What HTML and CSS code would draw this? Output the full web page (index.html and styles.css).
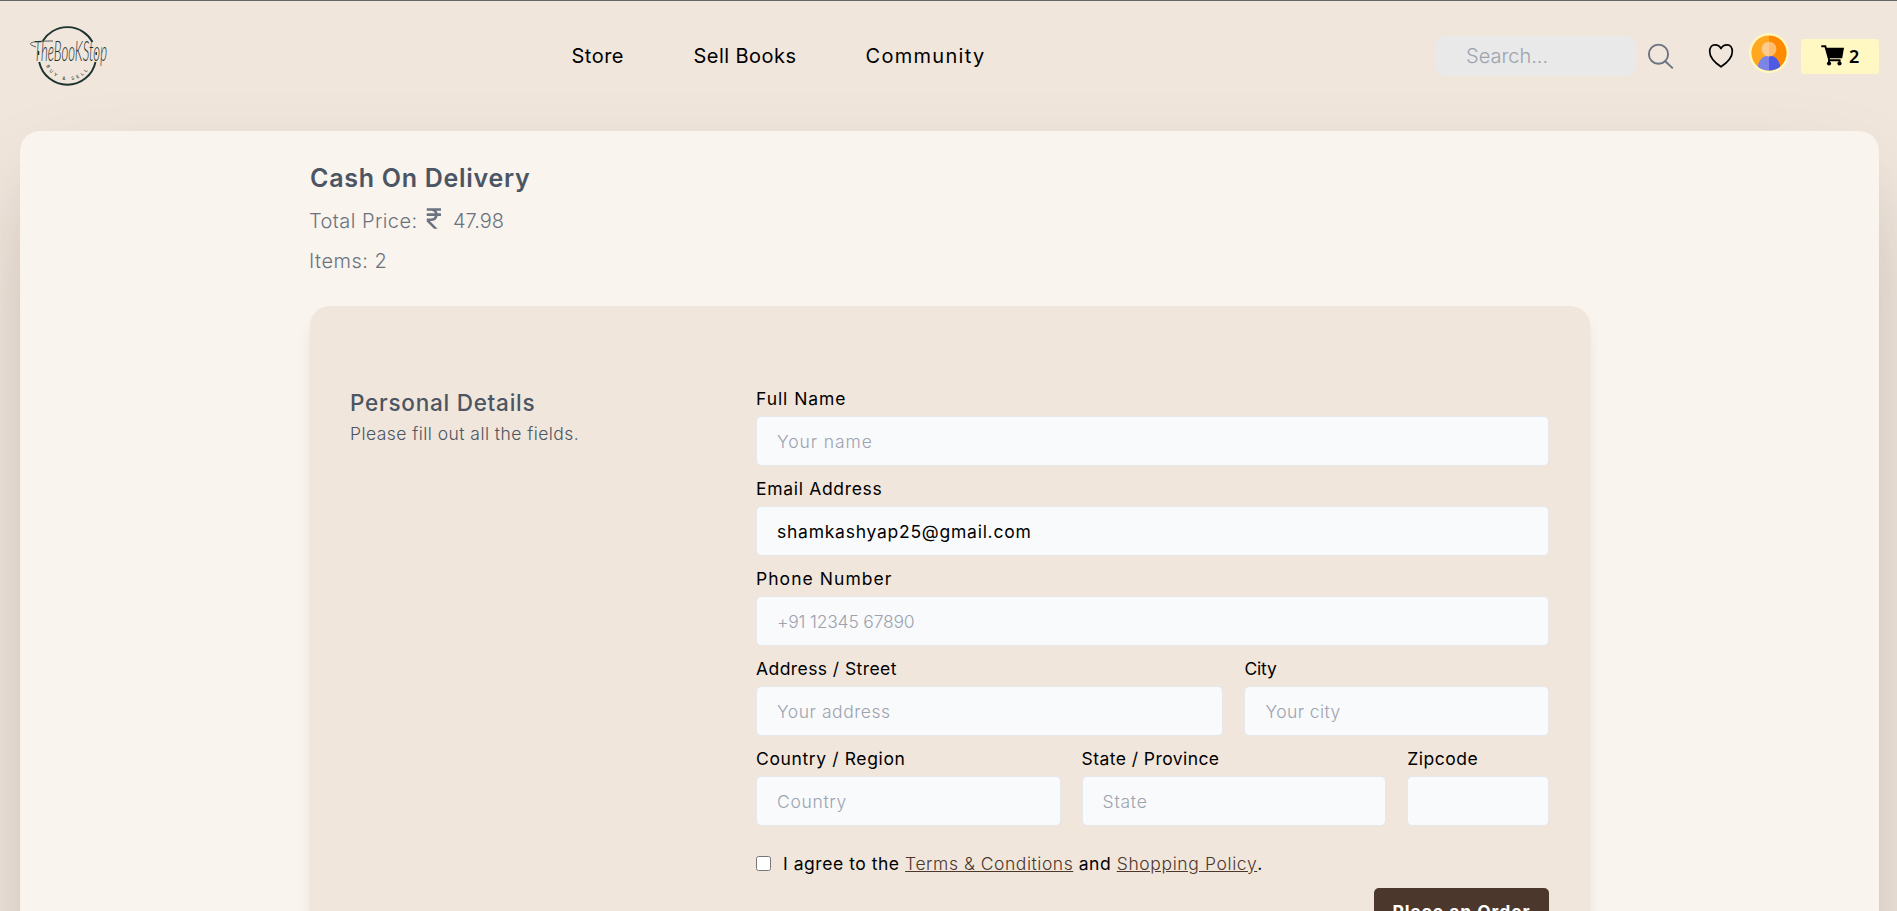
FILE: index.html
```html
<!DOCTYPE html>
<html lang="en">
<head>
<meta charset="utf-8">
<title>The Book Stop - Cash On Delivery</title>
<link rel="stylesheet" href="styles.css">
</head>
<body>
<header class="navbar">
  <a class="logo">
    <svg width="101" height="70" viewBox="0 0 101 70">
      <defs>
        <path id="arc" d="M25.500 43 A24 24 0 0 0 71 43"/>
      </defs>
      <path d="M22.700 20A28.800 28.800 0 0 1 72.500 21M75.500 41A28.800 28.800 0 0 1 19.200 41" fill="none" stroke="#1c332e" stroke-width="1.900"/>
      <path d="M18.500 34V30M76.200 34V31" stroke="#1c332e" stroke-width="1.500"/>
      <path d="M16 26C6 22.500 8 20 33 20" fill="none" stroke="#3c4f49" stroke-width=".9"/>
      <text class="wordmark" x="14" y="40" font-size="27" textLength="73" lengthAdjust="spacingAndGlyphs">TheBooKStop</text>
      <text class="tagline"><textPath href="#arc" startOffset="2">BUY &amp; SELL</textPath></text>
    </svg>
  </a>
  <nav class="menu">
    <a class="store">Store</a>
    <a class="sell">Sell Books</a>
    <a class="community">Community</a>
  </nav>
  <div class="tools">
    <input class="search" type="text" placeholder="Search...">
    <svg class="search-icon" width="27" height="27" viewBox="0 0 27 27" fill="none" stroke="#6b7280" stroke-width="1.9"><circle cx="11.5" cy="11.2" r="9.6"/><path d="M18 18l7.800 7.400"/></svg>
    <svg class="heart" width="26" height="26" viewBox="0 0 26 26" fill="none" stroke="#000" stroke-width="1.7" stroke-linejoin="round"><path d="M13 5.600C11.500 2.800 9.500 1.900 7 1.900C3.500 1.900 1.700 5 1.700 8.400C1.700 14.500 7.500 20 13 23.800C18.500 20 24.300 14.500 24.300 8.400C24.300 5 22.500 1.900 19 1.900C16.500 1.900 14.500 2.800 13 5.600z"/></svg>
    <svg class="avatar" width="40" height="40" viewBox="0 0 40 40">
      <defs><clipPath id="face"><circle cx="20" cy="20" r="17.600"/></clipPath></defs>
      <circle cx="20" cy="20" r="20" fill="#fff8c2"/>
      <g clip-path="url(#face)">
        <path fill="#ffa820" d="M0 0h20v40H0z"/><path fill="#ff8a00" d="M20 0h20v40H20z"/>
        <path fill="#7c84e8" d="M20 22.500C12 22.500 8 30 8 40h12z"/><path fill="#4d5ae5" d="M20 22.500C28 22.500 32 30 32 40H20z"/>
        <path fill="#ffcb8c" d="M20 8.700a7.400 7.400 0 0 0 0 14.800z"/><path fill="#ffbd6e" d="M20 8.700a7.400 7.400 0 0 1 0 14.800z"/>
      </g>
    </svg>
    <a class="cart">
      <svg width="24" height="22" viewBox="0 0 24 22"><path d="M4.600 2.800H23L21.200 13.300H7.800z"/><path d="M.3 1.300H4.300L8.300 15.300H19.500M8 15V18M18.600 15V18" fill="none" stroke="#000" stroke-width="1.900"/><circle cx="8" cy="18.500" r="2.100"/><circle cx="18.500" cy="18.500" r="2.100"/></svg>
      <span>2</span>
    </a>
  </div>
</header>

<main class="page">
  <div class="container">
    <h1>Cash On Delivery</h1>
    <p class="total"><span class="total-label">Total Price:</span><svg width="31" height="31" viewBox="0 0 24 24" fill="#6b7280"><path d="M17 6V4H6v2h3.500c1.302 0 2.401.838 2.815 2H6v2h6.315A2.994 2.994 0 0 1 9.500 12H6v2.414L11.586 20h2.828l-6-6H9.500a5.007 5.007 0 0 0 4.898-4H17V8h-2.602a4.933 4.933 0 0 0-.924-2H17z"/></svg><span class="amount">47.98</span></p>
    <p class="items">Items: 2</p>

    <section class="panel">
      <div class="intro">
        <h2>Personal Details</h2>
        <p>Please fill out all the fields.</p>
      </div>
      <form class="fields">
        <div class="field span5"><label class="t9">Full Name</label><input class="t9" placeholder="Your name"></div>
        <div class="field span5"><label class="t65">Email Address</label><input class="t75" value="shamkashyap25@gmail.com"></div>
        <div class="field span5"><label class="t10">Phone Number</label><input class="tn2" placeholder="+91 12345 67890"></div>
        <div class="field span3"><label class="t4">Address / Street</label><input class="t5" placeholder="Your address"></div>
        <div class="field span2"><label class="tn2">City</label><input class="t4" placeholder="Your city"></div>
        <div class="field span2"><label class="t6">Country / Region</label><input class="t65" placeholder="Country"></div>
        <div class="field span2"><label class="t4">State / Province</label><input class="t75" placeholder="State"></div>
        <div class="field"><label class="t5">Zipcode</label><input></div>
        <div class="agree span5">
          <input type="checkbox">
          <span class="t5">I agree to the <a>Terms &amp; Conditions</a> and <a class="t6">Shopping Policy</a>.</span>
        </div>
        <div class="submit span5"><button class="t9" type="button">Place an Order</button></div>
      </form>
    </section>
  </div>
</main>
</body>
</html>
```
FILE: styles.css
```css
* { box-sizing: border-box; }
body {
  margin: 0;
  height: 911px;
  overflow: hidden;
  background: #f0e6dc;
  font-family: Inter, "Noto Sans", sans-serif;
  font-size: 17.5px;
  font-weight: 375;
  color: #000;
}
h1, h2, p { margin: 0; }
input, button { font: inherit; letter-spacing: inherit; }

.navbar {
  display: flex;
  justify-content: space-between;
  align-items: center;
  height: 111px;
  padding: 0 18px 0 20px;
  border-top: 1px solid #666;
}
.logo { display: flex; }
.wordmark { font-family: Lato, sans-serif; font-style: italic; font-weight: 300; fill: #1c332e; }
.tagline { font-family: Inter, sans-serif; font-size: 4.600px; font-weight: 600; letter-spacing: 2.700px; fill: #4b5a54; }
.menu { display: flex; gap: 70px; font-size: 20px; line-height: 30px; }
.menu a { white-space: nowrap; }
.store { width: 52px; margin-left: -1px; letter-spacing: .5px; }
.sell { width: 102px; letter-spacing: .45px; }
.community { width: 119px; letter-spacing: 1.300px; }

.tools { display: flex; align-items: center; }
.search {
  width: 200px;
  height: 40px;
  padding: 0 30px;
  border: 0;
  border-radius: 8px;
  background: #e9e9e9;
  font-size: 20px;
  font-weight: 300;
  outline: none;
}
.search::placeholder, .field input::placeholder { color: #9ca3af; opacity: 1; }
.search-icon { margin-left: 11px; }
.heart { margin-left: 34px; }
.avatar { margin: 0 12px 7px 15px; }
.cart {
  display: flex;
  align-items: center;
  gap: 4px;
  width: 78px;
  height: 35px;
  padding-left: 20px;
  border-radius: 3px;
  background: #fff8c2;
  font: 600 18px "Noto Sans", sans-serif;
}

.page {
  height: 1000px;
  margin: 20px 18px 0 20px;
  padding-top: 30px;
  border-radius: 20px;
  background: #f9f4ed;
  box-shadow: 0 50px 100px -20px rgba(60, 45, 45, .23), 0 30px 60px -30px rgba(60, 20, 0, .12);
}
.container { width: 1280px; margin-left: 290px; }
h1 {
  font-size: 25px;
  font-weight: 600;
  line-height: 35px;
  letter-spacing: .72px;
  color: #4b5563;
}
.total, .items { margin-left: -1px; font-size: 20px; font-weight: 300; color: #6b7280; }
.total { display: flex; height: 50px; line-height: 50px; }
.total-label { width: 110px; letter-spacing: .42px; white-space: nowrap; }
.total svg { margin-top: 6.500px; }
.amount { margin-left: 3px; }
.items { height: 30px; line-height: 30px; letter-spacing: .5px; }

.panel {
  display: grid;
  grid-template-columns: 386px 793px;
  gap: 20px;
  height: 760px;
  margin-top: 30px;
  padding: 80px 40px;
  border-radius: 20px;
  background: #f0e6dc;
  box-shadow: 0 10px 15px -3px rgba(0, 0, 0, .1), 0 4px 6px -4px rgba(0, 0, 0, .1);
}
.intro { color: #4b5563; }
h2 { margin-top: 1px; font-size: 22.500px; font-weight: 460; line-height: 32px; letter-spacing: .75px; }
.intro p { margin-top: 2px; font-weight: 300; line-height: 26px; letter-spacing: .45px; }

.fields { display: grid; grid-template-columns: repeat(5, 1fr); column-gap: 21px; row-gap: 10px; align-content: start; }
.field { display: flex; flex-direction: column; min-width: 0; }
.field label { height: 30px; line-height: 25px; white-space: nowrap; }
.field input {
  width: 100%;
  height: 50px;
  padding: 0 20px;
  border: 1px solid #e5e7eb;
  border-radius: 5px;
  background: #f9fafc;
  outline: none;
}
.field input::placeholder { font-weight: 300; }
.span5 { grid-column: span 5; }
.span3 { grid-column: span 3; }
.span2 { grid-column: span 2; }

.agree { display: flex; align-items: center; gap: 12px; height: 25px; margin-top: 15px; }
.agree input { width: 15px; height: 15px; margin: 0; }
.agree a { font-weight: 300; color: #4c372d; text-decoration: underline; }
.submit { display: flex; justify-content: flex-end; margin-top: 2px; }
.submit button {
  width: 175px;
  height: 46px;
  padding: 0;
  border: 0;
  border-radius: 5px;
  background: #4c372d;
  color: #fff;
  font-weight: 700;
}

/* letter tracking steps */
.tn2 { letter-spacing: -.2px; }
.t4 { letter-spacing: .43px; }
.t5 { letter-spacing: .54px; }
.t6 { letter-spacing: .62px; }
.t65 { letter-spacing: .68px; }
.t75 { letter-spacing: .75px; }
.t9 { letter-spacing: .93px; }
.t10 { letter-spacing: 1.050px; }
```
